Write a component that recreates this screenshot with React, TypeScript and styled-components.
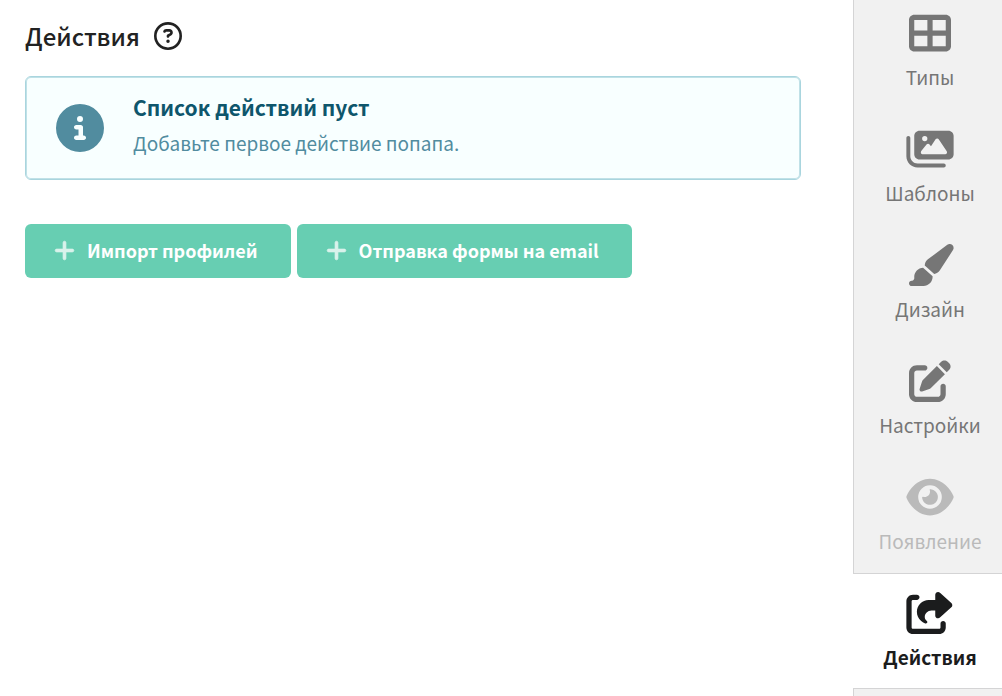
import React from "react";
import styled, { createGlobalStyle } from "styled-components";
import {
  FaCircleInfo,
  FaEye,
  FaImages,
  FaPaintbrush,
  FaPenToSquare,
  FaPlus,
  FaRegCircleQuestion,
  FaShareFromSquare,
  FaTableCellsLarge,
} from "react-icons/fa6";

const GlobalStyle = createGlobalStyle`
  *, *::before, *::after { box-sizing: border-box; }
  body {
    margin: 0;
    background: #fff;
    color: #222;
    font-family: "Source Sans Pro", "Noto Sans CJK SC", "Noto Sans", sans-serif;
  }
`;

const Page = styled.div`
  display: flex;
  height: 100vh;
  overflow: hidden;
`;

const Main = styled.main`
  flex: 1;
  min-width: 0;
  padding: 18px 52px 24px 25px;
`;

const Header = styled.header`
  display: flex;
  align-items: center;
  gap: 14px;
  height: 36px;
  margin-bottom: 22px;
`;

const Title = styled.h1`
  margin: 0;
  font-size: 24px;
  line-height: 36px;
  font-weight: 500;
`;

const HelpButton = styled.button`
  display: flex;
  padding: 0;
  border: 0;
  background: none;
  color: #222;
  font-size: 28px;
  cursor: pointer;
`;

const Notice = styled.section`
  display: flex;
  align-items: center;
  gap: 29px;
  min-height: 104px;
  padding: 0 31px 0 30px;
  border: 1px solid #a9d5de;
  border-radius: 6px;
  box-shadow: inset 0 0 0 1px #c0e1e7;
  background: #f8ffff;
  color: #518c9f;
`;

const NoticeIcon = styled(FaCircleInfo)`
  flex: none;
  font-size: 48px;
`;

const NoticeBody = styled.div`
  padding-bottom: 6px;
`;

const NoticeTitle = styled.h2`
  margin: 0;
  color: #0e566c;
  font-size: 21px;
  line-height: 36px;
  font-weight: 700;
`;

const NoticeText = styled.p`
  margin: 0;
  font-size: 19px;
  line-height: 36px;
`;

const Actions = styled.div`
  display: flex;
  flex-wrap: wrap;
  gap: 6px;
  margin-top: 44px;
`;

const ActionButton = styled.button`
  display: flex;
  align-items: center;
  gap: 11px;
  height: 54px;
  padding: 0 33px 2px 28px;
  border: 0;
  border-radius: 6px;
  background: #67ceb2;
  color: #fff;
  font-family: inherit;
  font-size: 18px;
  line-height: 28px;
  font-weight: 700;
  cursor: pointer;
`;

const PlusIcon = styled(FaPlus)`
  flex: none;
  font-size: 23px;
  stroke-width: 16px;
  opacity: 0.75;
`;

const Sidebar = styled.nav`
  flex: none;
  width: 149px;
  background: linear-gradient(to right, #d4d4d5 1px, #f1f1f1 1px);
`;

const NavList = styled.ul`
  margin: -7px 0 0;
  padding: 0;
  list-style: none;
`;

const NavButton = styled.button<{ $active?: boolean }>`
  display: flex;
  flex-direction: column;
  align-items: center;
  gap: 9px;
  width: 100%;
  height: 116px;
  padding: 18px 0 0 5px;
  border: 0;
  border-top: 1px solid ${(p) => (p.$active ? "#d4d4d5" : "transparent")};
  border-bottom: 1px solid ${(p) => (p.$active ? "#d4d4d5" : "transparent")};
  background: ${(p) => (p.$active ? "#fff" : "transparent")};
  color: ${(p) => (p.$active ? "#1b1c1d" : "#767676")};
  font-family: inherit;
  font-size: 19px;
  line-height: 28px;
  font-weight: ${(p) => (p.$active ? 700 : 400)};
  cursor: pointer;

  &:disabled {
    color: #bababa;
    cursor: default;
  }

  svg {
    flex: none;
    width: 48px;
    height: 42px;
  }
`;

const items = [
  { label: "Типы", Icon: FaTableCellsLarge },
  { label: "Шаблоны", Icon: FaImages },
  { label: "Дизайн", Icon: FaPaintbrush },
  { label: "Настройки", Icon: FaPenToSquare },
  { label: "Появление", Icon: FaEye, disabled: true },
  { label: "Действия", Icon: FaShareFromSquare, active: true },
];

export default function App() {
  return (
    <>
      <GlobalStyle />
      <Page>
        <Main>
          <Header>
            <Title>Действия</Title>
            <HelpButton type="button" aria-label="Справка">
              <FaRegCircleQuestion />
            </HelpButton>
          </Header>
          <Notice>
            <NoticeIcon />
            <NoticeBody>
              <NoticeTitle>Список действий пуст</NoticeTitle>
              <NoticeText>Добавьте первое действие попапа.</NoticeText>
            </NoticeBody>
          </Notice>
          <Actions>
            <ActionButton type="button">
              <PlusIcon />
              Импорт профилей
            </ActionButton>
            <ActionButton type="button">
              <PlusIcon />
              Отправка формы на email
            </ActionButton>
          </Actions>
        </Main>
        <Sidebar>
          <NavList>
            {items.map(({ label, Icon, active, disabled }) => (
              <li key={label}>
                <NavButton
                  type="button"
                  $active={active}
                  disabled={disabled}
                  aria-current={active ? "page" : undefined}
                >
                  <Icon />
                  {label}
                </NavButton>
              </li>
            ))}
          </NavList>
        </Sidebar>
      </Page>
    </>
  );
}
